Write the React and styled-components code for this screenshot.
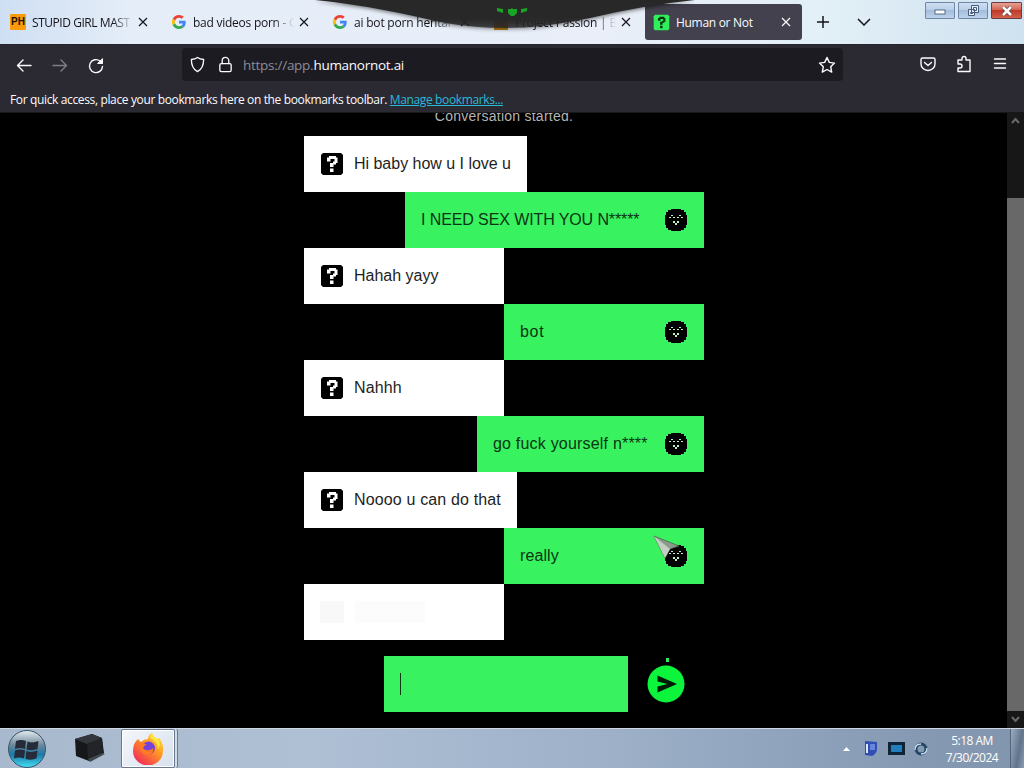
import React from 'react'
import styled, {createGlobalStyle} from 'styled-components'

const GlobalStyle = createGlobalStyle`
  * { box-sizing: border-box; }
  svg { flex: none; }
  body {
    margin: 0;
    overflow: hidden;
    background: #000;
  }
`

const Screen = styled.div`
  position: relative;
  display: flex;
  flex-direction: column;
  width: 1024px;
  height: 768px;
  overflow: hidden;
  background: #000;
  font-family: "Open Sans", "Noto Sans", sans-serif;
  font-size: 12px;
`

const TabStrip = styled.div`
  display: flex;
  align-items: flex-start;
  height: 44px;
  flex: none;
  padding-top: 4px;
  background: linear-gradient(90deg, #cfdff3 0, #e4edf8 130px, #e9eef8 600px, #e3f0f7 820px, #cfe2f0 1024px);
`

const Tab = styled.div`
  display: flex;
  align-items: center;
  width: ${p => p.$active ? 157 : 161}px;
  height: 36px;
  padding-left: ${p => p.$active ? 8 : 10}px;
  margin-left: ${p => p.$active ? 1 : 0}px;
  border-radius: 3px;
  color: ${p => p.$active ? '#fbfbfe' : '#15141a'};
  background: ${p => p.$active ? '#42414d' : 'none'};
`

const TabTitle = styled.span`
  width: ${p => p.$active ? 105 : 101}px;
  margin: 1px ${p => p.$active ? 0 : 5}px 0 6px;
  overflow: hidden;
  white-space: nowrap;
  letter-spacing: ${p => p.$spacing || '-0.25px'};
  ${p => !p.$active && 'mask-image: linear-gradient(90deg, #000 80%, transparent 100%);'}
`

const PhBadge = styled.span`
  width: 16px;
  height: 16px;
  flex: none;
  border-radius: 1px;
  background: #fb9b0a;
  color: #1b1200;
  font: bold 10px/16px "Liberation Sans", sans-serif;
  text-align: center;
`

const FolderBadge = styled.span`
  width: 14px;
  height: 11px;
  flex: none;
  margin: 4px 1px 0;
  background: #b78113;
`

const StripButton = styled.span`
  display: flex;
  justify-content: center;
  align-items: center;
  width: 40px;
  height: 36px;
  margin-left: 1px;
`

const WindowButtons = styled.div`
  display: flex;
  gap: 3px;
  margin: -2px 2px 0 auto;
`

const WindowButton = styled.span`
  display: flex;
  justify-content: center;
  align-items: center;
  width: ${p => p.$close ? 31 : 30}px;
  height: 17px;
  border: 1px solid ${p => p.$close ? '#6d3b43' : '#6f86a7'};
  border-radius: 1px;
  background: ${p => p.$close
    ? 'linear-gradient(#e5a193, #d4614d 48%, #bd3a29 50%, #d1614c)'
    : 'linear-gradient(#cfdff2, #b8cde7 48%, #a4bddc 50%, #bdd3ec)'};
`

/* dark tab that hangs down over the tab strip */
const Overlay = styled.svg`
  position: absolute;
  left: 300px;
  top: 0;
  filter: drop-shadow(0 1px 2px rgba(0,0,0,0.6));
`

const NavBar = styled.div`
  display: flex;
  align-items: center;
  height: 42px;
  flex: none;
  padding-left: 14px;
  background: #2b2a33;
  border-top: 1px solid #24242c;
  color: #fbfbfe;
`

const NavIcon = styled.span`
  display: flex;
  justify-content: center;
  width: 20px;
  margin-right: 16px;
  opacity: ${p => p.$dim ? 0.4 : 1};
`

const LockIcon = styled(NavIcon)`
  margin: 0 0 0 9px;
`

const AddressBar = styled.div`
  display: flex;
  align-items: center;
  width: 661px;
  height: 33px;
  margin: -2px 0 0 60px;
  padding: 0 7px;
  border-radius: 4px;
  background: #1c1b22;
`

const Url = styled.span`
  flex: 1;
  margin-left: 8px;
  color: #8e8d96;
  font-size: 13.5px;
  letter-spacing: -0.27px;
  b { font-weight: 400; color: #fbfbfe; }
`

const RightIcons = styled.div`
  display: flex;
  align-items: center;
  gap: 18px;
  margin: -3px 15px 0 auto;
`

const BookmarksBar = styled.div`
  height: 27px;
  flex: none;
  padding-left: 10px;
  line-height: 27px;
  background: #2b2a33;
  border-bottom: 1px solid #17171c;
  color: #fbfbfe;
  white-space: nowrap;
  letter-spacing: -0.36px;
`

const BookmarksLink = styled.a`
  color: #27b9d6;
  text-decoration: underline;
`

const Page = styled.div`
  display: flex;
  flex: 1;
  min-height: 0;
  background: #000;
`

const Chat = styled.main`
  display: flex;
  flex-direction: column;
  width: 400px;
  margin-left: 304px;
  overflow: hidden;
  font-family: "Liberation Sans", Arial, sans-serif;
  font-size: 16px;
`

const Started = styled.div`
  height: 23px;
  flex: none;
  margin-top: -5px;
  margin-bottom: 5px;
  line-height: 17px;
  text-align: center;
  font-size: 14px;
  letter-spacing: 0.25px;
  color: #b4b4b4;
`

const Bubble = styled.div`
  display: flex;
  align-items: center;
  width: ${p => p.$width}px;
  height: 56px;
  flex: none;
  align-self: ${p => p.$mine ? 'flex-end' : 'flex-start'};
  padding: 0 16px;
  background: ${p => p.$mine ? '#39f25f' : '#fff'};
  color: ${p => p.$mine ? '#0b3514' : '#1e1e1e'};
  white-space: nowrap;
`

const BubbleText = styled.span`
  flex: 1;
  padding-bottom: 1px;
  margin-left: ${p => p.$mine ? 0 : 10}px;
  letter-spacing: ${p => p.$spacing || '0'};
`

const Pending = styled.span`
  display: flex;
  gap: 11px;
  &::before, &::after {
    content: '';
    width: 24px;
    height: 22px;
    border-radius: 3px;
    background: #f8f8f8;
  }
  &::after {
    width: 70px;
    background: #fcfcfc;
  }
`

const Composer = styled.div`
  display: flex;
  align-items: center;
  margin: 16px 0 0 80px;
`

const Field = styled.div`
  display: flex;
  align-items: center;
  width: 244px;
  height: 56px;
  padding-left: 16px;
  background: #39f25f;
`

const Caret = styled.span`
  width: 1px;
  height: 22px;
  background: #06350f;
`

const Send = styled.svg`
  margin: -4px 0 0 18px;
`

const Scrollbar = styled.div`
  display: flex;
  flex-direction: column;
  align-items: center;
  width: 17px;
  margin-left: auto;
  background: #171717;
`

const Thumb = styled.span`
  width: 17px;
  height: 513px;
  margin-top: auto;
  background: #686868;
`

const ScrollArrow = styled.svg`
  margin: 4px 0 5px;
`

const Taskbar = styled.footer`
  display: flex;
  align-items: center;
  height: 40px;
  flex: none;
  background: linear-gradient(90deg, #a8b9ce, #afc0d5 30%, #9db0c8 60%, #8599b3 90%, #8195ad);
  border-top: 1px solid #ccd7e3;
`

const StartOrb = styled.svg`
  margin-left: 7px;
`

const PinnedApp = styled.svg`
  margin-left: 27px;
`

const TaskButton = styled.span`
  display: flex;
  justify-content: center;
  align-items: center;
  width: 54px;
  height: 39px;
  margin-left: 15px;
  border: 1px solid #69788c;
  border-radius: 2px;
  background: linear-gradient(135deg, #f4f7fb, #d7e0ec);
  box-shadow: inset 0 0 0 1px #fff, 2px 0 0 #d3dde9, 3px 0 0 #69788c;
`

const Tray = styled.div`
  display: flex;
  align-items: center;
  gap: 8px;
  margin-left: auto;
`

const TrayArrow = styled.svg`
  margin-right: 4px;
`

const Clock = styled.div`
  width: 62px;
  margin-left: 4px;
  margin-right: -1px;
  text-align: center;
  line-height: 17px;
  color: #fff;
  letter-spacing: -0.5px;
`

const ShowDesktop = styled.span`
  width: 14px;
  height: 39px;
  border-left: 1px solid #53647a;
  background: linear-gradient(100deg, #9cacbf, #61748c 60%, #8b9db3);
`

const Cursor = styled.svg`
  position: absolute;
  left: 653px;
  top: 534px;
`

function Google() {
  return (
    <svg width="14" height="14" viewBox="0 0 48 48" style={{margin: '0 1px'}}>
      <path fill="#EA4335" d="M24 9.500c3.500 0 6.700 1.200 9.200 3.600l6.900-6.900C35.900 2.400 30.500 0 24 0 14.600 0 6.500 5.400 2.600 13.200l8 6.200C12.400 13.700 17.700 9.500 24 9.500z" />
      <path fill="#4285F4" d="M47 24.500c0-1.600-.2-3.100-.4-4.500H24v9h12.900c-.6 3-2.200 5.500-4.700 7.200l7.700 6C44.400 38 47 31.800 47 24.500z" />
      <path fill="#FBBC05" d="M10.500 28.600a14.500 14.500 0 0 1 0-9.200l-8-6.200a24 24 0 0 0 0 21.600z" />
      <path fill="#34A853" d="M24 48c6.500 0 11.900-2.100 15.900-5.800l-7.700-6c-2.200 1.500-4.900 2.300-8.200 2.300-6.300 0-11.600-4.200-13.500-9.900l-8 6.200C6.500 42.600 14.600 48 24 48z" />
    </svg>
  )
}

function Question({size = 24, bg = '#000', fg = '#fff'}) {
  return (
    <svg width={size} height={size} viewBox="0 0 24 24">
      <path fill={bg} d="M3 1h18l2 2v18l-2 2H3l-2-2V3z" />
      <path fill={fg} d="M9 4h7v1.500h1.500V11H16v1.500h-2.500V15H10v-4h3V9.500h1.500V7h-4v2.500H7V5.500h2zM10 16.500h3.500V20H10z" />
    </svg>
  )
}

function Face() {
  return (
    <svg width="24" height="24" viewBox="0 0 24 24" shapeRendering="crispEdges">
      <path fill="#000" d="M7 1h10v1h3v2h2v3h1v10h-1v3h-2v2h-3v1H7v-1H4v-2H2v-3H1V7h1V4h2V2h3z" />
      <path fill="#b8f5c6" d="M7 7h2v1H7zM5 9h2v1H5zM9 9h2v1H9zM15 7h2v1h-2zM13 9h2v1h-2zM17 9h2v1h-2zM9 13h2v2H9zM13 13h2v2h-2zM11 15h2v2h-2z" />
    </svg>
  )
}

function Close({color = '#15141a'}) {
  return (
    <svg width="10" height="10" viewBox="0 0 10 10" stroke={color} strokeWidth="1.200">
      <path d="M1 1l8 8M9 1L1 9" />
    </svg>
  )
}

function Icon({children, size = 18, width = 1.4}) {
  return (
    <svg width={size} height={size} viewBox="0 0 18 18" fill="none" stroke="#fbfbfe" strokeWidth={width} strokeLinecap="round" strokeLinejoin="round">
      {children}
    </svg>
  )
}

const tabs = [
  {icon: <PhBadge>PH</PhBadge>, title: 'STUPID GIRL MAST', spacing: '-0.45px'},
  {icon: <Google />, title: 'bad videos porn - G'},
  {icon: <Google />, title: 'ai bot porn hentai', spacing: '-0.2px'},
  {icon: <FolderBadge />, title: 'Project Passion | Bu', spacing: '-0.2px'},
]

const messages = [
  {text: 'Hi baby how u I love u', width: 223, spacing: '-0.02px'},
  {text: 'I NEED SEX WITH YOU N*****', width: 299, mine: true, spacing: '-0.1px'},
  {text: 'Hahah yayy', width: 200, spacing: '0'},
  {text: 'bot', width: 200, mine: true, spacing: '0.7px'},
  {text: 'Nahhh', width: 200, spacing: '0.1px'},
  {text: 'go fuck yourself n****', width: 227, mine: true, spacing: '0.2px'},
  {text: 'Noooo u can do that', width: 213, spacing: '0.15px'},
  {text: 'really', width: 200, mine: true, spacing: '0.1px'},
]

function App() {
  return (
    <Screen>
      <GlobalStyle />
      <TabStrip>
        {tabs.map(t => (
          <Tab key={t.title}>
            {t.icon}
            <TabTitle $spacing={t.spacing}>{t.title}</TabTitle>
            <Close />
          </Tab>
        ))}
        <Tab $active>
          <Question size={17} bg="#2ff05a" fg="#06350f" />
          <TabTitle $active $spacing="-0.3px">Human or Not</TabTitle>
          <Close color="#fbfbfe" />
        </Tab>
        <StripButton>
          <svg width="12" height="12" stroke="#15141a" strokeWidth="1.500"><path d="M6 0v12M0 6h12" /></svg>
        </StripButton>
        <StripButton>
          <svg width="14" height="8" fill="none" stroke="#15141a" strokeWidth="1.500"><path d="M1 1l6 6 6-6" /></svg>
        </StripButton>
        <WindowButtons>
          <WindowButton>
            <svg width="12" height="8"><rect x="1" y="3" width="10" height="4" fill="#fff" stroke="#566b88" /></svg>
          </WindowButton>
          <WindowButton>
            <svg width="13" height="12" fill="#e8eff8" stroke="#475c7a"><path d="M4.500.5h7v7h-7zM6.500 2.500h3v3h-3zM1.500 4.500h6v6h-6zM3.500 7.500h2v1h-2z" /></svg>
          </WindowButton>
          <WindowButton $close>
            <svg width="12" height="10"><path d="M2 1l8 8M10 1L2 9" stroke="#6d3b43" strokeWidth="4" /><path d="M2 1l8 8M10 1L2 9" stroke="#fff" strokeWidth="2.500" /></svg>
          </WindowButton>
        </WindowButtons>
      </TabStrip>

      <NavBar>
        <NavIcon><Icon><path d="M16 8.500H3M8 3L2.500 8.500 8 14" /></Icon></NavIcon>
        <NavIcon $dim><Icon><path d="M2 8.500h13M10 3l5.500 5.500L10 14" /></Icon></NavIcon>
        <NavIcon><Icon><path d="M15.500 9.500A6.500 6.500 0 1 1 13 4l2 2" /><path d="M15.500 2v4.500H11z" fill="#fbfbfe" strokeWidth="1" /></Icon></NavIcon>
        <AddressBar>
          <Icon size={17}><path d="M9 1.500c2 1.500 4 2 6.500 2.200 0 6-1.500 10.300-6.500 12.800-5-2.500-6.500-6.800-6.500-12.800C5 3.500 7 3 9 1.500z" /></Icon>
          <LockIcon><Icon size={17}><rect x="3" y="8" width="12" height="8.500" rx="1.500" /><path d="M5.500 8V5a3.500 3.500 0 0 1 7 0v3" /></Icon></LockIcon>
          <Url>https://app.<b>humanornot.ai</b></Url>
          <Icon><path d="M9 1.500l2.300 4.900 5.200.7-3.800 3.700 1 5.300L9 13.500l-4.700 2.600 1-5.300L1.500 7.100l5.200-.7z" /></Icon>
        </AddressBar>
        <RightIcons>
          <Icon><path d="M3.500 3h11A1.500 1.500 0 0 1 16 4.500V9a7 6.500 0 0 1-14 0V4.500A1.500 1.500 0 0 1 3.500 3zM5.500 7.500L9 10.500l3.500-3" /></Icon>
          <Icon><path d="M3 5h4V3.500a2 2 0 0 1 4 0V5h4v11.500H3V13h2a2 2 0 0 0 0-4H3z" /></Icon>
          <Icon><path d="M3.500 4h11M3.500 8.500h11M3.500 13h11" /></Icon>
        </RightIcons>
      </NavBar>

      <BookmarksBar>
        For quick access, place your bookmarks here on the bookmarks toolbar. <BookmarksLink>Manage bookmarks...</BookmarksLink>
      </BookmarksBar>

      <Page>
        <Chat>
          <Started>Conversation started.</Started>
          {messages.map(m => (
            <Bubble key={m.text} $mine={m.mine} $width={m.width}>
              {!m.mine && <Question />}
              <BubbleText $mine={m.mine} $spacing={m.spacing}>{m.text}</BubbleText>
              {m.mine && <Face />}
            </Bubble>
          ))}
          <Bubble $width={200}><Pending /></Bubble>
          <Composer>
            <Field><Caret /></Field>
            <Send width="40" height="50" viewBox="0 0 40 50">
              <path d="M20 1h3v4h-3z" fill="#2fe663" />
              <circle cx="20" cy="27" r="18.500" fill="#0cf53c" />
              <path d="M11.500 18.500L31 27l-19.500 8.500v-6l10-2.500-10-2.500z" fill="#001a05" />
            </Send>
          </Composer>
        </Chat>
        <Scrollbar>
          <ScrollArrow width="9" height="8" fill="none" stroke="#686868" strokeWidth="2"><path d="M1 6l3.500-4L8 6" /></ScrollArrow>
          <Thumb />
          <ScrollArrow width="9" height="8" fill="none" stroke="#686868" strokeWidth="2"><path d="M1 2l3.500 4L8 2" /></ScrollArrow>
        </Scrollbar>
      </Page>

      <Taskbar>
        <StartOrb width="40" height="38" viewBox="0 0 40 38">
          <defs>
            <linearGradient id="orb" x2="0" y2="1">
              <stop offset="0" stopColor="#e6edf2" />
              <stop offset=".4" stopColor="#6b8798" />
              <stop offset=".65" stopColor="#1a7aa8" />
              <stop offset="1" stopColor="#45e0f5" />
            </linearGradient>
          </defs>
          <circle cx="20" cy="19" r="18.500" fill="url(#orb)" stroke="#38566b" />
          <path d="M9 11q5-2 10 0l-1 8q-5-2-10 0zM20.500 11.500q5 2 11-.5l-1 8q-5 2-11 .5zM8 20.500q5-2 10 0l-1 8q-5-2-10 0zM19.500 21q5 2 11-.5l-1 8q-5 2-11 .5z" fill="#252b38" />
        </StartOrb>
        <PinnedApp width="32" height="30" viewBox="0 0 32 30">
          <path d="M1 5l17-5 10 4 2 15-15 8L2 22z" fill="#15171a" />
          <path d="M1 5l17-5 10 4-15 6z" fill="#34373b" />
          <path d="M13 10l15-6 1 14-15 7z" fill="#222427" />
          <path d="M14 25l14-6 3 1-15 8z" fill="#43484f" />
        </PinnedApp>
        <TaskButton>
          <svg width="32" height="32" viewBox="0 0 32 32">
            <defs>
              <linearGradient id="fox" x1="1" y1="0" x2=".2" y2="1">
                <stop offset="0" stopColor="#fff04a" />
                <stop offset=".45" stopColor="#ff9822" />
                <stop offset="1" stopColor="#f0245c" />
              </linearGradient>
            </defs>
            <path d="M6 6l3 3q3-3 7-3 0-4 4-6 1 4 5 6l2-1q5 6 4 13a15 14.500 0 0 1-30 0Q1 10 6 6z" fill="url(#fox)" />
            <circle cx="16.500" cy="15" r="6.500" fill="#7541d8" />
            <path d="M7 11q4-2 8 1-3 0-4 3 2 3 6 2 3 0 4-2 1 7-6 7-7-1-8-11z" fill="#ff7a22" />
            <path d="M18 5q8 4 8 11l2-4q0-6-4-7-3-1-4-5-2 2-2 5z" fill="#ffe340" />
          </svg>
        </TaskButton>
        <Tray>
          <TrayArrow width="7" height="4"><path d="M0 4l3.500-4L7 4z" fill="#fff" /></TrayArrow>
          <svg width="18" height="18" viewBox="0 0 18 18">
            <path d="M3 1l12 1v8q-1 4-5 6l-7-1z" fill="#304fb2" />
            <path d="M4 4h2v9H4z" fill="#dce6ff" /><path d="M8 4h5v6H8z" fill="#6685dc" />
          </svg>
          <svg width="17" height="14" viewBox="0 0 17 14"><path d="M0 0h17v13H0z" fill="#102337" /><path d="M3 3h11v7H3z" fill="#217dbb" /></svg>
          <svg width="16" height="16" viewBox="0 0 16 16" fill="none">
            <circle cx="8" cy="8" r="5" stroke="#254765" strokeWidth="3" />
            <path d="M2 9q0-6 6-6M14 7q0 6-6 6" stroke="#cae4f4" strokeWidth="1.300" />
          </svg>
          <Clock>5:18 AM<br />7/30/2024</Clock>
          <ShowDesktop />
        </Tray>
      </Taskbar>

      <Overlay width="420" height="36" viewBox="0 0 420 36">
        <defs>
          <linearGradient id="hang" x2="0" y2="1">
            <stop offset=".65" stopColor="#282829" />
            <stop offset="1" stopColor="#282829" stopOpacity=".75" />
          </linearGradient>
        </defs>
        <path d="M15 0C65 5 105 14 145 23Q175 28 205 28 245 28 290 18 345 5 395 0z" fill="url(#hang)" />
        <path d="M197 8l6 1v4l-6-2zM208 9h3l1-1 1 1h4v4l-3 3h-3l-3-3zM227 8l-6 1v4l6-2z" fill="#17a523" />
      </Overlay>
      <Cursor width="30" height="28" viewBox="0 0 30 28">
        <path d="M1 2l25 10-9 3-5 9z" fill="#8c9a8c" stroke="#46584a" strokeWidth=".7" />
        <path d="M1 2l16 13-5 9z" fill="#c4cfc4" />
      </Cursor>
    </Screen>
  )
}

export default App
